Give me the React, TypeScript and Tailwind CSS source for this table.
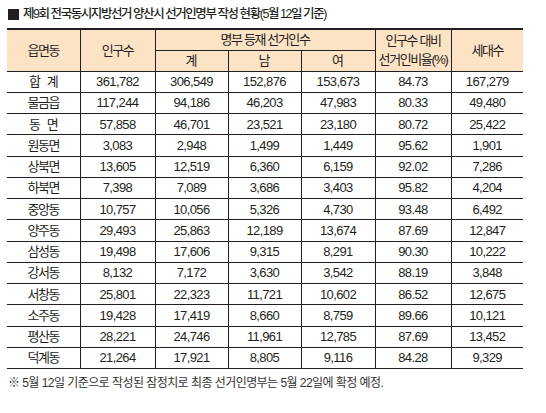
const rows = [
  ["합 계", "361,782", "306,549", "152,876", "153,673", "84.73", "167,279"],
  ["물금읍", "117,244", "94,186", "46,203", "47,983", "80.33", "49,480"],
  ["동 면", "57,858", "46,701", "23,521", "23,180", "80.72", "25,422"],
  ["원동면", "3,083", "2,948", "1,499", "1,449", "95.62", "1,901"],
  ["상북면", "13,605", "12,519", "6,360", "6,159", "92.02", "7,286"],
  ["하북면", "7,398", "7,089", "3,686", "3,403", "95.82", "4,204"],
  ["중앙동", "10,757", "10,056", "5,326", "4,730", "93.48", "6,492"],
  ["양주동", "29,493", "25,863", "12,189", "13,674", "87.69", "12,847"],
  ["삼성동", "19,498", "17,606", "9,315", "8,291", "90.30", "10,222"],
  ["강서동", "8,132", "7,172", "3,630", "3,542", "88.19", "3,848"],
  ["서창동", "25,801", "22,323", "11,721", "10,602", "86.52", "12,675"],
  ["소주동", "19,428", "17,419", "8,660", "8,759", "89.66", "10,121"],
  ["평산동", "28,221", "24,746", "11,961", "12,785", "87.69", "13,452"],
  ["덕계동", "21,264", "17,921", "8,805", "9,116", "84.28", "9,329"],
]

const widths = ["w-[73px]", "w-[75px]", "w-[73px]", "w-[73px]", "w-[74px]", "w-[76px]", "w-[72px]"]

const font = "font-['Liberation_Sans','Noto_Sans_CJK_KR',sans-serif]"
const ko = "tracking-[-1.4px]"

export default function App() {
  return (
    <div className={`w-[546px] h-[413px] bg-white text-[#231f20] ${font} pl-[7px] pt-[6px]`}>
      <div className="flex items-center gap-[4px] h-[16px] pl-[1px]">
        <span className="w-[11px] h-[11px] bg-[#231f20]" />
        <span className="text-[12.5px] font-medium tracking-[-1.45px] leading-none">
          제9회 전국동시지방선거 양산시 선거인명부 작성 현황(5월 12일 기준)
        </span>
      </div>

      <table className="mt-[6px] w-[516px] table-fixed border-collapse text-[13px] leading-none text-center">
        <colgroup>
          {widths.map((w, i) => (
            <col key={i} className={w} />
          ))}
        </colgroup>
        <thead className="bg-[#fde3c6]">
          <tr className="h-[21px] border-t-2 border-[#231f20]">
            <th rowSpan={2} className={`font-normal border-b border-[#231f20] ${ko}`}>읍면동</th>
            <th rowSpan={2} className={`font-normal border-x border-b border-[#231f20] ${ko}`}>인구수</th>
            <th colSpan={3} className={`font-normal border-x border-[#231f20] ${ko}`}>명부 등재 선거인수</th>
            <th rowSpan={2} className={`font-normal border-x border-b border-[#231f20] leading-[19px] ${ko}`}>
              인구수 대비
              <br />
              선거인비율(%)
            </th>
            <th rowSpan={2} className={`font-normal border-b border-[#231f20] ${ko}`}>세대수</th>
          </tr>
          <tr className="h-[21px]">
            <th className="font-normal border border-[#231f20]">계</th>
            <th className="font-normal border border-[#231f20]">남</th>
            <th className="font-normal border border-[#231f20]">여</th>
          </tr>
        </thead>
        <tbody>
          {rows.map((r, i) => (
            <tr key={i} className="h-[21.25px] border-b border-[#231f20]">
              {r.map((c, j) => (
                <td
                  key={j}
                  className={`${j > 0 && j < 6 ? "border-r" : ""} ${j === 0 ? `border-r ${ko} [word-spacing:5px]` : "tracking-[-0.6px]"} border-[#231f20]`}
                >
                  {c}
                </td>
              ))}
            </tr>
          ))}
        </tbody>
      </table>

      <p className="mt-[8px] pl-[1px] text-[12px] tracking-[-0.55px] text-[#333] leading-none">
        ※ 5월 12일 기준으로 작성된 잠정치로 최종 선거인명부는 5월 22일에 확정 예정.
      </p>
    </div>
  )
}
